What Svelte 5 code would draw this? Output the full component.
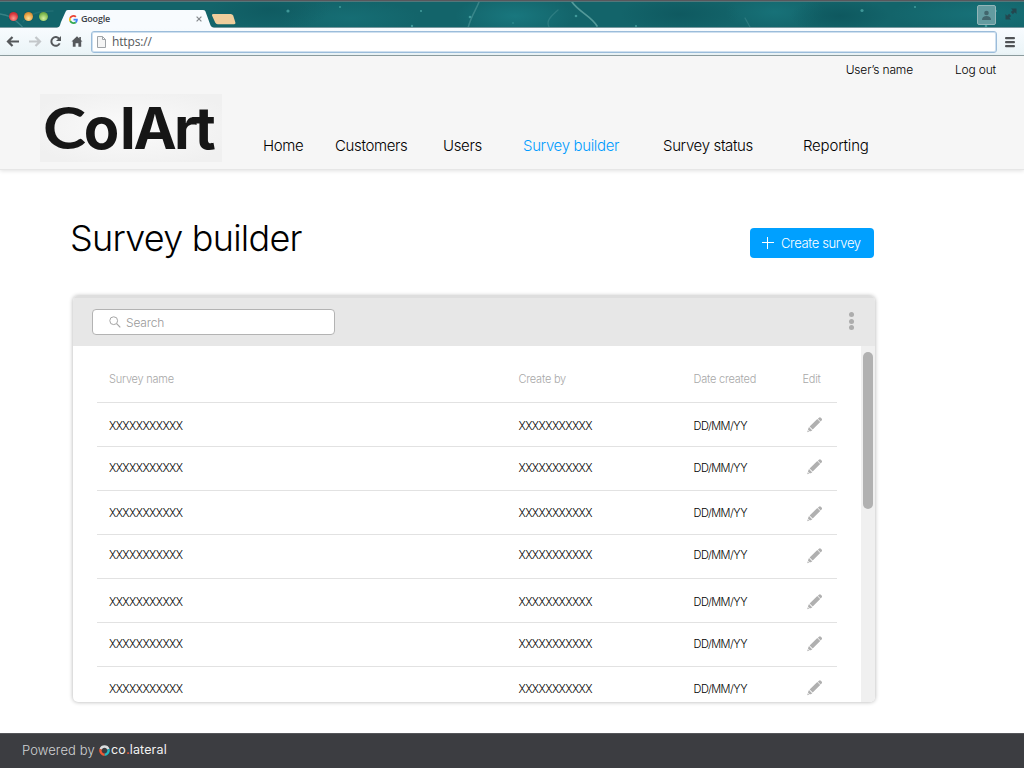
<script>
  const nav = ['Home', 'Customers', 'Users', 'Survey builder', 'Survey status', 'Reporting'];
  const active = 'Survey builder';
  const rows = [
    { text: 16, icon: 14 },
    { text: 14, icon: 12 },
    { text: 15, icon: 15 },
    { text: 13, icon: 13 },
    { text: 16, icon: 15 },
    { text: 14, icon: 13 },
    { text: 15, icon: 13 }
  ];
  const stars = [
    [288, 11, 1.6], [340, 7, 1], [421, 11, 1.1], [412, 26, 1.2], [470, 17, 1.3], [576, 16, 1.3],
    [636, 26, 1.1], [513, 23, 0.7], [862, 10.5, 1.6], [915, 7, 1.1], [996, 11, 1], [986, 26, 1.3]
  ];
</script>

<div class="page">
  <div class="browser">
    <div class="strip">
      <svg class="sky" width="1024" height="28" viewBox="0 0 1024 28">
        <defs>
          <radialGradient id="neb"><stop offset="0" stop-color="#19777e" /><stop offset="1" stop-color="#19777e" stop-opacity="0" /></radialGradient>
          <radialGradient id="dark"><stop offset="0" stop-color="#0d555c" /><stop offset="1" stop-color="#0d555c" stop-opacity="0" /></radialGradient>
        </defs>
        <rect width="1024" height="28" fill="#13646a" />
        <ellipse cx="515" cy="16" rx="60" ry="22" fill="url(#neb)" />
        <ellipse cx="350" cy="18" rx="70" ry="18" fill="url(#neb)" opacity=".5" />
        <ellipse cx="775" cy="12" rx="50" ry="20" fill="url(#neb)" opacity=".7" />
        <ellipse cx="980" cy="14" rx="90" ry="20" fill="url(#neb)" opacity=".7" />
        <ellipse cx="270" cy="10" rx="60" ry="20" fill="url(#dark)" opacity=".6" />
        <ellipse cx="680" cy="14" rx="60" ry="20" fill="url(#dark)" opacity=".7" />
        <ellipse cx="840" cy="16" rx="50" ry="18" fill="url(#dark)" opacity=".8" />
        <g fill="none" stroke="#6fb0ae" stroke-linecap="round">
          <path d="M479 2c-3 8-8 14-11 26" stroke-width="1.5" opacity=".4" />
          <path d="M572 2c7 10 19 14 25 24" stroke-width="1.7" opacity=".7" />
          <path d="M558 10c-8 7-12 11-9 17M745 18l5 9" stroke-width="1.3" opacity=".25" />
          <path d="M0 14c8 1 12 3 16 7s4 3 7 7" stroke-width="1.4" opacity=".4" />
          <path d="M23 22c5-8 17-11 30-11" stroke-width="1.4" opacity=".15" />
        </g>
        {#each stars as [x, y, r]}
          <circle cx={x} cy={y} {r} fill="#65c4c1" opacity=".55" />
        {/each}
        <rect width="1024" height="1" fill="#59575c" />
        <rect y="1" width="1024" height="1" fill="#52777b" />
        <rect y="27" width="1024" height="1" fill="#77999f" />
        <path d="M57 28c3-1 3-3 4-6l4-9c1-2 1-3 3-3h135c2 0 2.500 1 3 3l4 11c1 3 2 3 4 4z" fill="#f8fbfe" />
        <path d="M212 15.500q-.6-1.500 1.200-1.500h17.500q1.800 0 2.500 1.600l2.200 7q.4 1.700-1.200 1.700h-16.500q-1.800 0-2.500-1.700z" fill="#efcd9c" />
      </svg>
      <div class="lights">
        <i class="red"></i><i class="amber"></i><i class="green"></i>
      </div>
      <div class="tab">
        <svg width="9" height="9" viewBox="0 0 48 48">
          <path fill="#EA4335" d="M24 9.500c3.540 0 6.710 1.220 9.210 3.600l6.850-6.850C35.900 2.380 30.470 0 24 0 14.620 0 6.510 5.380 2.560 13.220l7.980 6.190C12.430 13.720 17.740 9.500 24 9.500z" />
          <path fill="#4285F4" d="M46.980 24.550c0-1.570-.15-3.090-.38-4.550H24v9.020h12.940c-.58 2.960-2.260 5.480-4.780 7.180l7.730 6c4.510-4.180 7.090-10.360 7.090-17.650z" />
          <path fill="#FBBC05" d="M10.530 28.590A14.500 14.500 0 0 1 9.770 24c0-1.600.27-3.140.76-4.590l-7.980-6.190A23.900 23.900 0 0 0 0 24c0 3.880.92 7.540 2.560 10.780l7.970-6.190z" />
          <path fill="#34A853" d="M24 48c6.480 0 11.930-2.130 15.890-5.810l-7.730-6c-2.150 1.450-4.920 2.300-8.160 2.300-6.260 0-11.570-4.220-13.470-9.910l-7.980 6.190C6.510 42.620 14.620 48 24 48z" />
        </svg>
        <span>Google</span>
        <svg class="x" width="6" height="6" viewBox="0 0 6 6"><path d="M.6.6l4.800 4.800M5.400.6L.6 5.400" stroke="#85898d" stroke-width="1.200" /></svg>
      </div>
      <div class="strip-end">
        <div class="person">
          <svg width="11" height="11" viewBox="0 0 11 11" fill="#42666d"><circle cx="5.500" cy="3" r="2.300" /><path d="M1 10c0-3 2-4 4.500-4S10 7 10 10z" /></svg>
        </div>
        <svg width="12" height="12" viewBox="0 0 12 12" fill="#24474f"><path d="M6 .5h5.500V6L9.800 4.300 7.900 6.200 5.800 4.100l1.900-1.900zM6 11.500H.5V6l1.700 1.700 1.900-1.900 2.100 2.100-1.900 1.900z" /></svg>
      </div>
    </div>
    <div class="toolbar">
      <svg width="84" height="26" viewBox="0 0 84 26" fill="none" stroke="#55585b" stroke-width="2.200">
        <path d="M8 13.500h11M12.500 9L8 13.500l4.500 4.500" />
        <path d="M29 13.500h11M35.500 9l4.500 4.500-4.500 4.500" stroke="#c3c7ca" />
        <path d="M59.300 10.800a4.400 4.400 0 1 0 .4 4.600" stroke-width="2" />
        <path d="M61 8v5h-5z" fill="#55585b" stroke="none" />
        <path d="M77 8.200l-5.500 5.400h1.300v5.200h2.800v-3.600h2.800v3.600h2.800v-5.200h1.300l-1.600-1.600V8.900h-1.600v1.600z" fill="#55585b" stroke="none" />
      </svg>
      <div class="url">
        <svg width="9" height="12" viewBox="0 0 9 12" fill="#f5f5f5" stroke="#a0a4a8"><path d="M.5.5h5L8.500 3.500v8h-8zM5.500.5v3h3" /></svg>
        <span>https://</span>
      </div>
      <svg class="burger" width="10" height="11" viewBox="0 0 10 11" fill="#505356"><rect y="0" width="10" height="2.300" rx="1" /><rect y="4" width="10" height="2.300" rx="1" /><rect y="8" width="10" height="2.300" rx="1" /></svg>
    </div>
  </div>

  <header>
    <div class="account"><span>User’s name</span><span>Log out</span></div>
    <div class="brand-row">
      <svg class="logo" width="182" height="68" viewBox="0 0 182 68">
        <defs><radialGradient id="lg" cx=".5" cy=".5" r=".6"><stop offset="0" stop-color="#fbfbfb" /><stop offset="1" stop-color="#f0f0f0" /></radialGradient></defs>
        <rect width="182" height="68" fill="url(#lg)" />
        <g fill="#161616" font-weight="700" font-size="58">
          <text class="lato" transform="translate(3 55) scale(1.12 1)">C</text>
          <text x="43.800 80 93.500 134 154.500" y="55">olArt</text>
        </g>
      </svg>
      <nav>
        {#each nav as item}
          <span class:active={item === active}>{item}</span>
        {/each}
      </nav>
    </div>
  </header>

  <main>
    <div class="title-row">
      <h1>Survey builder</h1>
      <button>
        <svg width="12" height="12" viewBox="0 0 12 12"><path d="M5.500 0v12M0 5.500h12" stroke="#fff" stroke-width="1" /></svg>
        <span>Create survey</span>
      </button>
    </div>

    <section class="panel">
      <div class="panel-bar">
        <div class="search">
          <svg width="12" height="12" viewBox="0 0 12 12" fill="none" stroke="#a5a5a5"><circle cx="4.700" cy="4.700" r="3.900" /><path d="M7.600 7.600l3.700 3.700" stroke-width="1.200" /></svg>
          <span>Search</span>
        </div>
        <div class="dots"><i></i><i></i><i></i></div>
      </div>
      <div class="panel-body">
        <div class="table">
          <div class="row head">
            <span>Survey name</span><span>Create by</span><span>Date created</span><span>Edit</span>
          </div>
          {#each rows as r}
            <div class="row">
              <span class="xs" style:padding-top="{r.text}px">XXXXXXXXXXX</span>
              <span class="xs" style:padding-top="{r.text}px">XXXXXXXXXXX</span>
              <span class="date" style:padding-top="{r.text}px">DD/MM/YY</span>
              <svg style:margin-top="{r.icon}px" width="16" height="16" viewBox="0 0 16 16" fill="#b0b0b0">
                <path d="M10.900 1.700l1-1q1-.9 2 0l.7.700q.9 1 0 2l-1 1zM10.300 2.100l2.900 2.900-7.500 7.500-3.100-3.100zM2 10.100l3.300 3.300-2.400 1.100-2-2zM.8 13.200l1.400 1.400-2 .6z" />
              </svg>
            </div>
          {/each}
        </div>
        <div class="track"><div class="thumb"></div></div>
      </div>
    </section>
  </main>

  <footer>
    <span class="powered">Powered by</span>
    <svg width="11" height="11" viewBox="0 0 11 11" fill="none" stroke-width="2.400">
      <path d="M1.600 4.200A4.200 4.200 0 0 1 9.400 4.200" stroke="#d9dcdd" />
      <path d="M9.400 4.200A4.200 4.200 0 0 1 5.500 9.700" stroke="#22b9c4" />
      <path d="M5.500 9.700A4.200 4.200 0 0 1 1.600 4.200" stroke="#ee5a36" />
    </svg>
    <span class="co">co<b>.</b>lateral</span>
  </footer>
</div>

<style>
  :global(body) { margin: 0; background: #fff; overflow: hidden; }
  .page {
    width: 1024px;
    height: 768px;
    display: flex;
    flex-direction: column;
    overflow: hidden;
    font-family: Inter, "Liberation Sans", sans-serif;
    font-weight: 300;
    color: #000;
    background: #fff;
  }
  svg { display: block; flex: none; }
  span { white-space: nowrap; }

  .strip { position: relative; height: 28px; display: flex; }
  .sky { position: absolute; inset: 0; }
  .lights, .tab, .strip-end { position: relative; display: flex; }
  .lights { gap: 6px; padding: 12px 0 0 9px; width: 60px; box-sizing: border-box; }
  .lights i { width: 9px; height: 9px; border-radius: 50%; box-shadow: 0 0 1px #163c40; }
  .red { background: radial-gradient(circle at 50% 70%, #ff9a90, #d9363c 60%, #9b2c30); }
  .amber { background: radial-gradient(circle at 50% 70%, #ffe29a, #e59b3c 60%, #a06a28); }
  .green { background: radial-gradient(circle at 50% 70%, #d5f0a0, #7db84e 60%, #4e8038); }
  .tab { align-items: center; width: 142px; height: 18px; margin-top: 10px; padding-left: 9px; box-sizing: border-box; }
  .tab span { margin-left: 3px; font: 600 9px/12px "Open Sans", sans-serif; color: #3c4248; letter-spacing: -.2px; }
  .tab .x { margin-left: auto; }
  .strip-end { margin-left: auto; align-items: flex-start; gap: 9px; padding: 5px 7px 0 0; }
  .strip-end > svg { margin-top: 3px; }
  .person { width: 17px; height: 18px; border: 1px solid #93b5b8; border-radius: 2px; background: #639ba0; display: grid; place-items: center; }

  .toolbar {
    height: 28px;
    box-sizing: border-box;
    display: flex;
    align-items: flex-start;
    background: linear-gradient(#f8fbfe, #eaf4f7);
    border-bottom: 1px solid #8fa0a2;
  }
  .url {
    margin: 3px 8px 0 7px;
    flex: 1;
    height: 22px;
    box-sizing: border-box;
    border: 1px solid #9bbcda;
    box-shadow: inset 0 0 0 1px #cfe0ef;
    border-radius: 3px;
    background: #fff;
    display: flex;
    align-items: center;
    padding-left: 5px;
    gap: 6px;
  }
  .url span { font: 12px/18px "Open Sans", sans-serif; color: #55585b; letter-spacing: -.15px; }
  .burger { margin: 9px 9px 0 0; }

  header { height: 114px; box-sizing: border-box; background: #f6f6f6; border-bottom: 1px solid #e6e6e6; box-shadow: 0 1px 4px rgba(0, 0, 0, .12); flex: none; }
  .account { display: flex; justify-content: flex-end; gap: 42px; padding: 7px 28px 0 0; font-size: 12px; line-height: 14px; height: 38px; box-sizing: border-box; letter-spacing: -.17px; }
  .brand-row { display: flex; padding-left: 40px; }
  .logo { overflow: visible; }
  .logo text { font-family: Inter, sans-serif; }
  .logo .lato { font-family: Lato, sans-serif; }
  nav { margin: 43px 0 0 41px; display: grid; grid-template-columns: 72px 108px 80px 140px 140px 80px; font-size: 15px; line-height: 17px; height: 17px; letter-spacing: -.35px; }
  nav span:last-child { letter-spacing: -.2px; }
  nav .active { color: #009cff; }

  main { flex: 1; padding: 46px 0 0 71px; }
  .title-row { width: 803px; height: 80px; display: flex; justify-content: space-between; align-items: flex-start; }
  h1 { margin: 0 0 0 -1px; font-weight: 300; font-size: 36px; line-height: 44px; letter-spacing: -.75px; }
  button {
    margin: 12px 0 0;
    width: 124px;
    height: 30px;
    border: 0;
    border-radius: 4px;
    background: #00a0ff;
    color: #fff;
    font: 300 13px/16px Inter, sans-serif;
    display: flex;
    align-items: center;
    gap: 7px;
    padding: 0 0 0 12px;
    letter-spacing: -.36px;
  }

  .panel { margin-left: 1.500px; width: 802px; height: 406px; border-radius: 5px; overflow: hidden; box-shadow: 0 0 4px rgba(0, 0, 0, .32); background: #fff; }
  .panel-bar { height: 50px; box-sizing: border-box; background: #e7e7e7; border-top: 2px solid #dedede; display: flex; justify-content: space-between; padding: 11px 20.500px 0 19.500px; }
  .search { width: 243px; height: 26px; box-sizing: border-box; border: 1px solid #b3b3b3; border-radius: 4px; background: #fff; display: flex; align-items: center; padding-left: 16px; gap: 5px; font-size: 12px; line-height: 14px; color: #999; }
  .search span { letter-spacing: -.15px; padding-top: 1px; }
  .dots { display: flex; flex-direction: column; gap: 1.500px; padding-top: 3px; }
  .dots i { width: 5px; height: 5px; border-radius: 50%; background: #adadad; }
  .panel-body { height: 356px; display: flex; }
  .table { width: 739.500px; padding: 0 24px 0 24.500px; font-size: 11px; line-height: 14px; }
  .row { height: 44px; box-sizing: border-box; border-bottom: 1px solid #e2e2e2; padding-left: 12px; display: grid; grid-template-columns: 409.500px 175px 113px auto; align-items: start; }
  .row.head { height: 57px; padding-top: 26px; color: #a8a8a8; letter-spacing: -.22px; grid-template-columns: 409.500px 175px 109px auto; }
  .row .xs { letter-spacing: -.6px; }
  .row .date { letter-spacing: -.5px; }
  .track { flex: 1; background: #f0f0f0; padding: 6px 0 0 2px; }
  .thumb { width: 10px; height: 157px; border-radius: 5px; background: #b1b1b1; }

  footer { height: 35px; box-sizing: border-box; background: #3c3d41; border-top: 1px solid #55565a; display: flex; align-items: center; padding: 0 0 2px 22px; font: 300 13px/16px Inter, sans-serif; color: #d0d1d3; flex: none; }
  .powered { width: 77px; letter-spacing: .1px; }
  .co { margin-left: 1px; color: #f2f2f2; font-weight: 400; font-size: 12.500px; letter-spacing: .15px; }
  .co b { color: #ee5a36; font-weight: 400; }
</style>
